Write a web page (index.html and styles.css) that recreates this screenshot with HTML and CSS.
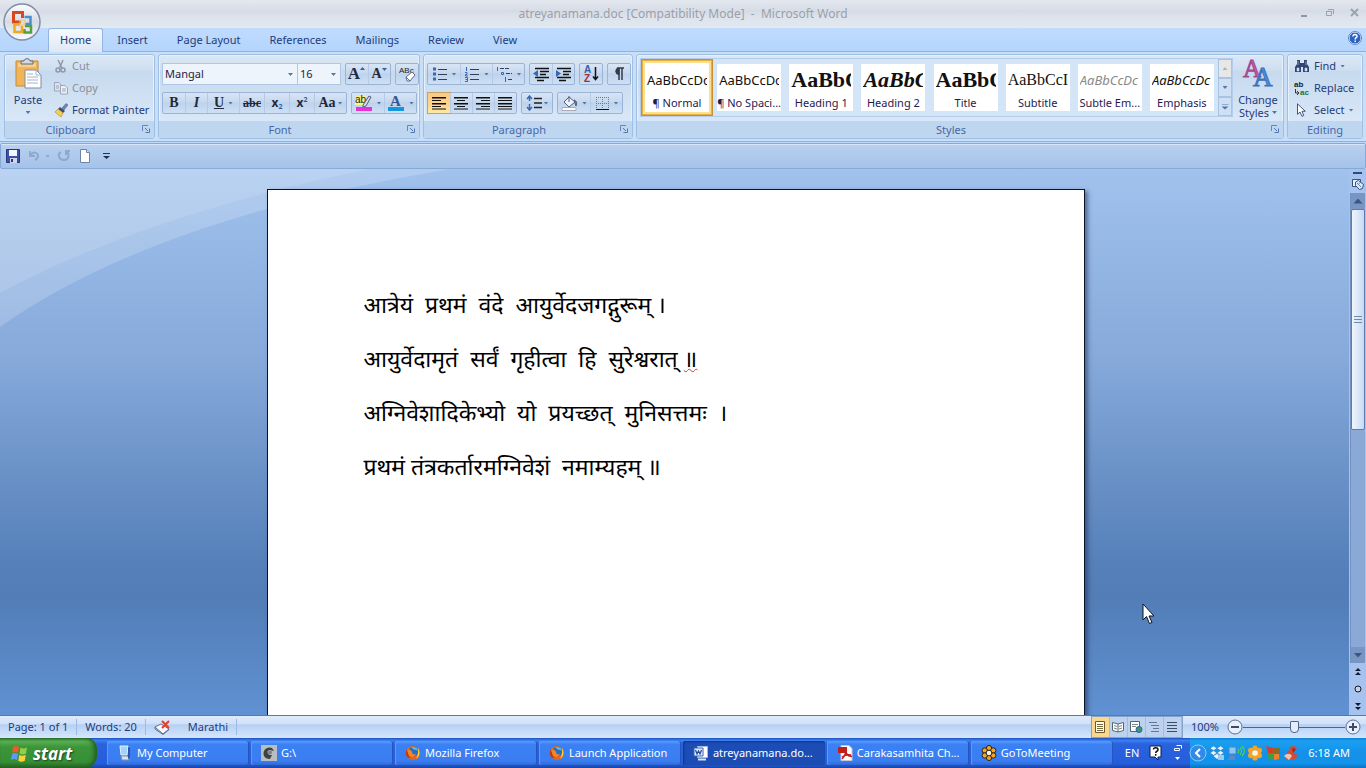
FILE: index.html
```html
<!DOCTYPE html>
<html lang="en">
<head>
    <meta charset="UTF-8">
    <meta name="viewport" content="width=device-width, initial-scale=1.0">
    <title>atreyanamana.doc [Compatibility Mode] - Microsoft Word</title>
    <link rel="stylesheet" href="styles.css">
</head>
<body>

    <!-- Shared icons -->
    <svg class="defs" width="0" height="0">
        <symbol id="launcher" viewBox="0 0 8 8">
            <path d="M.5 6V.5H6" fill="none" stroke="#6688b8"/>
            <path d="M3 3l3 3M7.500 3.500v4h-4" fill="none" stroke="#5577aa"/>
        </symbol>
        <symbol id="firefox" viewBox="0 0 16 16">
            <circle cx="8" cy="8" r="7" fill="#e8641b"/>
            <path d="M2 4a7 7 0 0 0 1 9l4-1-3-4z" fill="#c8380f"/>
            <circle cx="8.500" cy="6.500" r="4.800" fill="#2c6fb8"/>
            <path d="M6 2.500c3-1.500 6 0 7 3l-4-1z" fill="#58c0e8"/>
            <path d="M2 5c2-1 4 0 5 2 0 2 2 3 4 2-1 3-5 4-7 2z" fill="#f4862a"/>
            <path d="M13 3c2 3 2.500 8-2 11 2-3 2.500-7 2-11z" fill="#ffd23a"/>
        </symbol>
        <symbol id="flower" viewBox="0 0 18 18">
            <circle cx="9" cy="3.500" r="3"/><circle cx="9" cy="14.500" r="3"/>
            <circle cx="4.200" cy="6.200" r="3"/><circle cx="13.800" cy="6.200" r="3"/>
            <circle cx="4.200" cy="11.800" r="3"/><circle cx="13.800" cy="11.800" r="3"/>
            <circle cx="9" cy="9" r="3.200" fill="#fff3d8"/>
        </symbol>
    </svg>

    <!-- Title bar -->
    <header class="titlebar">
        <button class="office" type="button" aria-label="Office Button">
            <svg width="38" height="38" viewBox="0 0 38 38">
                <defs>
                    <linearGradient id="orb" x1="0" y1="0" x2="0" y2="1">
                        <stop offset="0" stop-color="#fdfdfe"/>
                        <stop offset=".5" stop-color="#d5dbe5"/>
                        <stop offset="1" stop-color="#fafcff"/>
                    </linearGradient>
                </defs>
                <circle cx="19" cy="19" r="18" fill="url(#orb)" stroke="#7f8da6" stroke-width="1.500"/>
                <g fill="none" stroke-width="3">
                    <path d="M18 19h-7.500v-9.500h9V15" stroke="#d9481c"/>
                    <path d="M21.500 14h6v7H22" stroke="#4a8ed0" stroke-width="2.500"/>
                    <path d="M17 21.500h-5.500v7.500h7.500v-6" stroke="#f2a81d" stroke-width="2.500"/>
                    <path d="M22 23h6v6.500h-6.500V26" stroke="#56a03a" stroke-width="2.500"/>
                    <path d="M17 17h5v5h-5z" stroke="#f3c470" stroke-width="1"/>
                </g>
            </svg>
        </button>
        <h1>atreyanamana.doc [Compatibility Mode] &nbsp;- &nbsp;Microsoft Word</h1>
        <div class="window-buttons">
            <button type="button" aria-label="Minimize"><svg width="10" height="10"><path d="M1 8h6" stroke="#8f98a8" stroke-width="2"/></svg></button>
            <button type="button" aria-label="Restore"><svg width="10" height="10"><path d="M1.500 3.500h5v4h-5zM3 1.500h5.500V6M1 3.500h6" fill="none" stroke="#9aa3b1"/></svg></button>
            <button type="button" aria-label="Close"><svg width="10" height="10"><path d="M1 1l7 7M8 1L1 8" stroke="#9aa3b1" stroke-width="2"/></svg></button>
        </div>
    </header>

    <!-- Tabs -->
    <nav class="tabs">
        <a class="tab active" href="#">Home</a>
        <a class="tab" href="#">Insert</a>
        <a class="tab" href="#">Page Layout</a>
        <a class="tab" href="#">References</a>
        <a class="tab" href="#">Mailings</a>
        <a class="tab" href="#">Review</a>
        <a class="tab" href="#">View</a>
        <button class="help" type="button" aria-label="Help">
            <svg width="14" height="14" viewBox="0 0 14 14">
                <circle cx="7" cy="7" r="6" fill="#2f62c0" stroke="#e8f1fd"/>
                <circle cx="7" cy="7" r="6.500" fill="none" stroke="#5f86c8"/>
                <path d="M5 5.500C5 3 9.200 3 9 5.400 9 6.800 7.200 6.600 7.200 8.400M7.200 9.600v1.400" fill="none" stroke="#fff" stroke-width="1.500"/>
            </svg>
        </button>
    </nav>

    <!-- Ribbon -->
    <div class="ribbon">
        <section class="group clipboard">
            <div class="group-body">
                <button class="big-button" type="button">
                    <svg width="28" height="32" viewBox="0 0 28 32">
                        <path d="M2 3h22v25H2z" fill="#f1b557" stroke="#c98a35"/>
                        <path d="M4 5h18v4H4z" fill="#f8cf8b"/>
                        <path d="M7 6V3h3c0-3 6-3 6 0h3v3z" fill="#d4dae4" stroke="#5f6b80"/>
                        <path d="M11 12h11l5 5v13H11z" fill="#fff" stroke="#7d8ca8"/>
                        <path d="M22 12v5h5M13 19h11M13 22h11M13 25h11M13 16h6" fill="none" stroke="#a4b4d0"/>
                    </svg>
                    <span>Paste</span>
                    <i class="arrow"></i>
                </button>
                <div class="command-list">
                    <button class="command" type="button" disabled>
                        <svg width="14" height="14" viewBox="0 0 14 14"><path d="M4 1l4 8M9 1L5.500 9" stroke="#8f98a6" stroke-width="1.500"/><circle cx="4" cy="11" r="2" fill="none" stroke="#8f98a6" stroke-width="1.500"/><circle cx="9" cy="11" r="2" fill="none" stroke="#8f98a6" stroke-width="1.500"/></svg>
                        Cut
                    </button>
                    <button class="command" type="button" disabled>
                        <svg width="14" height="14" viewBox="0 0 14 14"><path d="M.5 1.500H5L7.500 4v6h-7z" fill="#dde3ec" stroke="#9aa5b6"/><path d="M6.500 4.500H11L13.500 7v6h-7z" fill="#eef1f6" stroke="#9aa5b6"/><path d="M2 5h3M2 7h3M8 8h4M8 10h4" stroke="#9aa5b6"/></svg>
                        Copy
                    </button>
                    <button class="command" type="button">
                        <svg width="14" height="14" viewBox="0 0 14 14"><path d="M8 5l4-4.500L14 2l-4 5z" fill="#6f86b4" stroke="#46587f" stroke-width=".5"/><path d="M6 4l5 4-2 2-5-4z" fill="#3c4b70"/><path d="M4 6l5 4-2 4L1 9z" fill="#f3cf55" stroke="#a9822a" stroke-width=".6"/></svg>
                        Format Painter
                    </button>
                </div>
            </div>
            <footer>Clipboard<button class="launcher" type="button" aria-label="Clipboard options"><svg width="8" height="8"><use href="#launcher"/></svg></button></footer>
        </section>

        <section class="group font">
            <div class="group-body tool-rows">
                <div class="tool-row">
                    <div class="combos">
                        <label class="combo combo-font"><select aria-label="Font"><option>Mangal</option></select></label>
                        <label class="combo combo-size"><select aria-label="Font size"><option>16</option></select></label>
                    </div>
                    <div class="tools">
                        <button class="tool glyph grow" type="button" aria-label="Grow font">A<svg width="6" height="16"><path d="M0 4l2.500-3L5 4z" fill="#38619c"/></svg></button>
                        <button class="tool glyph shrink" type="button" aria-label="Shrink font">A<svg width="6" height="16"><path d="M0 2l2.500 3L5 2z" fill="#38619c"/></svg></button>
                    </div>
                    <div class="tools">
                        <button class="tool" type="button" aria-label="Clear formatting">
                            <svg width="18" height="18" viewBox="0 0 18 18"><text x="1" y="8" class="icon-text">ABc</text><path d="M8 12l6-5 3 3-5 6H9z" fill="#fff" stroke="#5d6f92"/><path d="M8 12l4 4" stroke="#5d6f92"/></svg>
                        </button>
                    </div>
                </div>
                <div class="tool-row">
                    <div class="tools">
                        <button class="tool glyph" type="button"><b>B</b></button>
                        <button class="tool glyph" type="button"><em>I</em></button>
                        <button class="tool glyph split" type="button"><u>U</u><i class="arrow"></i></button>
                        <button class="tool glyph small" type="button"><s>abc</s></button>
                        <button class="tool glyph script" type="button" aria-label="Subscript">x<sub>2</sub></button>
                        <button class="tool glyph script" type="button" aria-label="Superscript">x<sup>2</sup></button>
                        <button class="tool glyph case" type="button" aria-label="Change case">Aa<i class="arrow"></i></button>
                    </div>
                    <div class="tools">
                        <button class="tool split" type="button" aria-label="Highlight">
                            <svg width="18" height="18" viewBox="0 0 18 18"><path d="M0 2h11v9H0z" fill="#fdf38a"/><text x="0" y="9" class="icon-text wide">ab</text><path d="M8 11l6-9 2 1-5 9-3 1z" fill="#d4dbe8" stroke="#4f5f80"/><path d="M1 13h16v4H1z" fill="#e832d8"/></svg>
                            <i class="arrow"></i>
                        </button>
                        <button class="tool split" type="button" aria-label="Font color">
                            <svg width="18" height="18" viewBox="0 0 18 18"><text x="3" y="12" class="icon-letter">A</text><path d="M1 13h16v4H1z" fill="#1397dc"/></svg>
                            <i class="arrow"></i>
                        </button>
                    </div>
                </div>
            </div>
            <footer>Font<button class="launcher" type="button" aria-label="Font options"><svg width="8" height="8"><use href="#launcher"/></svg></button></footer>
        </section>

        <section class="group paragraph">
            <div class="group-body tool-rows">
                <div class="tool-row">
                    <div class="tools">
                        <button class="tool split" type="button" aria-label="Bullets">
                            <svg width="16" height="16"><path d="M1 3h3M1 8h3M1 13h3" stroke="#3a68b0" stroke-width="3"/><path d="M6 3.500h9M6 8.500h9M6 13.500h9" stroke="#333f55"/></svg><i class="arrow"></i>
                        </button>
                        <button class="tool split" type="button" aria-label="Numbering">
                            <svg width="16" height="16"><path d="M2.500 1v4M1 6.500h2v2H1.500V10H4M1 11.500h2.500v4H1M1.500 13.500h2" fill="none" stroke="#3a68b0"/><path d="M6 3.500h9M6 8.500h9M6 13.500h9" stroke="#333f55"/></svg><i class="arrow"></i>
                        </button>
                        <button class="tool split" type="button" aria-label="Multilevel list">
                            <svg width="17" height="16"><path d="M1.500 1v4M5.500 6.500h2v2h-2zM9.500 11v5" fill="none" stroke="#3a68b0"/><path d="M4 2.500h9M10 7.500h6M12 13.500h4" stroke="#333f55" stroke-dasharray="4 1"/></svg><i class="arrow"></i>
                        </button>
                    </div>
                    <div class="tools">
                        <button class="tool" type="button" aria-label="Decrease indent"><svg width="17" height="16"><path d="M2 2.500h14M7 5.500h9M7 8.500h6M2 11.500h14M4 14.500h7" stroke="#111" stroke-width="1.500"/><path d="M5 4v7L0 7.500z" fill="#3a68b0"/></svg></button>
                        <button class="tool" type="button" aria-label="Increase indent"><svg width="17" height="16"><path d="M2 2.500h14M8 5.500h8M8 8.500h6M2 11.500h14M4 14.500h7" stroke="#111" stroke-width="1.500"/><path d="M1 4v7l5-3.500z" fill="#3a68b0"/></svg></button>
                    </div>
                    <div class="tools">
                        <button class="tool" type="button" aria-label="Sort"><svg width="17" height="18"><text x="1" y="8" class="icon-sort">A</text><text x="1" y="17" class="icon-sort red">Z</text><path d="M12.500 2v12M10 11.500l2.500 3 2.500-3" fill="none" stroke="#111" stroke-width="1.500"/></svg></button>
                    </div>
                    <div class="tools">
                        <button class="tool glyph" type="button" aria-label="Show marks"><svg width="14" height="16"><path d="M7 2v12M10 2v12M5 2h7" fill="none" stroke="#333b4a" stroke-width="1.500"/><path d="M7 2a3 3 0 0 0 0 6.500z" fill="#333b4a" stroke="#333b4a"/></svg></button>
                    </div>
                </div>
                <div class="tool-row">
                    <div class="tools">
                        <button class="tool checked" type="button" aria-label="Align left"><svg width="15" height="14"><path d="M0 1.500h14M0 4.500h9M0 7.500h14M0 10.500h9M0 13h14" stroke="#111"/><path d="M0 2h14M0 8h14" stroke="#111"/></svg></button>
                        <button class="tool" type="button" aria-label="Center"><svg width="15" height="14"><path d="M0 1.500h14M3 4.500h8M0 7.500h14M3 10.500h8M0 13h14" stroke="#111"/><path d="M0 2h14M0 8h14" stroke="#111"/></svg></button>
                        <button class="tool" type="button" aria-label="Align right"><svg width="15" height="14"><path d="M0 1.500h14M5 4.500h9M0 7.500h14M5 10.500h9M0 13h14" stroke="#111"/><path d="M0 2h14M0 8h14" stroke="#111"/></svg></button>
                        <button class="tool" type="button" aria-label="Justify"><svg width="15" height="14"><path d="M0 1.500h14M0 4.500h14M0 7.500h14M0 10.500h14M0 13h14" stroke="#111"/><path d="M0 2h14M0 8h14" stroke="#111"/></svg></button>
                    </div>
                    <div class="tools">
                        <button class="tool spacing" type="button" aria-label="Line spacing"><svg width="16" height="16"><path d="M3.500 1v5M3.500 9v6M1 4l2.500-3L6 4M1 12l2.500 3L6 12" fill="none" stroke="#3a68b0" stroke-width="1.500"/><path d="M8 3.500h8M8 8h8M8 12.500h8" stroke="#222" stroke-width="1.500"/></svg><i class="arrow"></i></button>
                    </div>
                    <div class="tools">
                        <button class="tool split" type="button" aria-label="Shading"><svg width="17" height="16"><path d="M3 7l5-5 6 5-6 5z" fill="#f1f4fa" stroke="#4f5f80"/><path d="M8 7V1M13 5c3 1 3 3 2 6z" fill="#5a82b8" stroke="#4f5f80"/><path d="M1 12.500h14v3H1z" fill="#fff" stroke="#aab"/></svg><i class="arrow"></i></button>
                        <button class="tool split" type="button" aria-label="Borders"><svg width="15" height="15"><path d="M1.500 1v12M7.500 1v12M13.500 1v12M1 1.500h13M1 7.500h13" stroke="#6c7a94" stroke-dasharray="1 1"/><path d="M1 13.500h13" stroke="#111"/></svg><i class="arrow"></i></button>
                    </div>
                </div>
            </div>
            <footer>Paragraph<button class="launcher" type="button" aria-label="Paragraph options"><svg width="8" height="8"><use href="#launcher"/></svg></button></footer>
        </section>

        <section class="group styles">
            <div class="group-body">
                <div class="gallery">
                    <button class="style selected" type="button"><span class="sample">AaBbCcDc</span><span class="name">¶ Normal</span></button>
                    <button class="style" type="button"><span class="sample">AaBbCcDc</span><span class="name">¶ No Spaci...</span></button>
                    <button class="style" type="button"><span class="sample heading">AaBbC</span><span class="name">Heading 1</span></button>
                    <button class="style" type="button"><span class="sample heading slanted">AaBbC</span><span class="name">Heading 2</span></button>
                    <button class="style" type="button"><span class="sample heading">AaBbC</span><span class="name">Title</span></button>
                    <button class="style" type="button"><span class="sample subtitle">AaBbCcI</span><span class="name">Subtitle</span></button>
                    <button class="style" type="button"><span class="sample slanted subtle">AaBbCcDc</span><span class="name">Subtle Em...</span></button>
                    <button class="style" type="button"><span class="sample slanted">AaBbCcDc</span><span class="name">Emphasis</span></button>
                    <div class="gallery-scroll">
                        <button type="button" aria-label="Row up" disabled><i class="arrow up"></i></button>
                        <button type="button" aria-label="Row down"><i class="arrow"></i></button>
                        <button type="button" aria-label="More"><i class="arrow more"></i></button>
                    </div>
                </div>
                <button class="big-button change" type="button">
                    <svg width="32" height="32" viewBox="0 0 32 32">
                        <text x="1" y="19" class="change-a">A</text>
                        <text x="11" y="28" class="change-a blue">A</text>
                    </svg>
                    <span>Change</span>
                    <span>Styles<i class="arrow"></i></span>
                </button>
            </div>
            <footer>Styles<button class="launcher" type="button" aria-label="Styles options"><svg width="8" height="8"><use href="#launcher"/></svg></button></footer>
        </section>

        <section class="group editing">
            <div class="group-body">
                <div class="command-list">
                    <button class="command" type="button">
                        <svg width="16" height="14" viewBox="0 0 16 14"><path d="M3 1h3v3h4V1h3v4l2 3v5H9V8H7v5H1V8l2-3z" fill="#2f4672"/><path d="M3 9h2v3H3zM11 9h2v3h-2zM4 2v4M12 2v4" fill="#d5e2f5" stroke="#c5d5ee" stroke-width=".6"/></svg>
                        Find<i class="arrow"></i>
                    </button>
                    <button class="command" type="button">
                        <svg width="16" height="16" viewBox="0 0 16 16"><text x="0" y="7" class="icon-text bold">ab</text><path d="M1.500 9v4H4M3 11l2 2-2 2" fill="none" stroke="#333"/><text x="6" y="15" class="icon-text bold green">ac</text></svg>
                        Replace
                    </button>
                    <button class="command" type="button">
                        <svg width="16" height="14" viewBox="0 0 16 14"><path d="M3.500.8v10.500L6 9l2 4.300 1.800-.8L8 8.300h3.300z" fill="#fff" stroke="#43557c"/></svg>
                        Select<i class="arrow"></i>
                    </button>
                </div>
            </div>
            <footer>Editing</footer>
        </section>
    </div>

    <!-- Quick access toolbar -->
    <div class="quick-access">
        <button type="button" aria-label="Save"><svg width="14" height="14"><path d="M.5.500h13v13h-13z" fill="#3b52a8" stroke="#243880"/><path d="M3 1h8v6H3z" fill="#f4f7fd"/><path d="M4 9h7v5H4z" fill="#cdd5ea"/><path d="M5 10h2v3H5z" fill="#26397c"/></svg></button>
        <button type="button" aria-label="Undo" disabled><svg width="14" height="14"><path d="M2 2v5h5M2 7c3-5 8-4 8 0 0 2-1 3-3 4" fill="none" stroke="#8ea8cf" stroke-width="2"/></svg><i class="dots"></i></button>
        <button type="button" aria-label="Redo" disabled><svg width="14" height="14"><path d="M9 2c4 2 3 9-2 9S0 5 4 3M9 6V2h4" fill="none" stroke="#8ea8cf" stroke-width="2"/></svg></button>
        <button type="button" aria-label="New document"><svg width="12" height="14"><path d="M1.500.500h6l3 3v10h-9z" fill="#fff" stroke="#6c84ad"/><path d="M7.500.500v3h3" fill="#dce6f6" stroke="#6c84ad"/></svg></button>
        <button type="button" aria-label="Customize"><i class="arrow more dark"></i></button>
    </div>

    <!-- Document -->
    <main class="workspace">
        <svg class="swoosh" width="460" height="160" viewBox="0 0 460 160">
            <path d="M0 0h450C270 30 110 80 0 158z" fill="#fff" opacity=".18"/>
            <path d="M0 0h370C220 30 90 75 0 124z" fill="#fff" opacity=".12"/>
        </svg>
        <div class="canvas">
            <article class="page" lang="mr">
                <p>आत्रेयं  प्रथमं  वंदे  आयुर्वेदजगद्गुरूम् ।</p>
                <p>आयुर्वेदामृतं  सर्वं  गृहीत्वा  हि  सुरेश्वरात् <span class="misspelled">॥</span></p>
                <p>अग्निवेशादिकेभ्यो  यो  प्रयच्छत्  मुनिसत्तमः  ।</p>
                <p>प्रथमं तंत्रकर्तारमग्निवेशं  नमाम्यहम् ॥</p>
            </article>
        </div>
        <div class="scroll-column">
            <div class="split-handle"></div>
            <button type="button" class="ruler" aria-label="View ruler"><svg width="14" height="14"><path d="M1.500 2.500h8v7h-8z" fill="#eef4fd" stroke="#35527f"/><path d="M4.500 5l3-1.500 5 4-1 4-3 1-4-4z" fill="#dce8f9" stroke="#35527f"/><path d="M6 6l4 4M9 5.500L7 8" stroke="#6b85b0"/></svg></button>
            <div class="track">
                <button type="button" aria-label="Scroll up"><i class="arrow up"></i></button>
                <div class="thumb"></div>
                <button type="button" class="down" aria-label="Scroll down"><i class="arrow"></i></button>
            </div>
            <div class="browse">
                <button type="button" aria-label="Previous page"><svg width="8" height="8"><path d="M4 0l3 3H1zM4 4l3 3H1z" fill="#111a2c"/></svg></button>
                <button type="button" aria-label="Select browse object"><svg width="8" height="8"><circle cx="4" cy="4" r="3" fill="#c9d2de" stroke="#111a2c"/></svg></button>
                <button type="button" aria-label="Next page"><svg width="8" height="8"><path d="M4 4L1 1h6zM4 8L1 5h6z" fill="#111a2c"/></svg></button>
            </div>
        </div>
        <svg class="pointer" width="14" height="22" viewBox="0 0 14 22"><path d="M1 1v16l3.500-3.500L7.500 20.500l2.500-1L7 13h5z" fill="#fff" stroke="#0c1526"/></svg>
    </main>

    <!-- Status bar -->
    <div class="statusbar">
        <span class="status-item">Page: 1 of 1</span>
        <span class="status-item">Words: 20</span>
        <button class="status-item proof" type="button" aria-label="Proofing errors"><svg width="18" height="15"><path d="M1 7l6-3 8 5-6 5z" fill="#f6f8fc" stroke="#5b6f96"/><path d="M1 7v2l8 5.500 6-5V9" fill="none" stroke="#5b6f96"/><path d="M8 1l7 7M15 1L8 8" stroke="#e0412c" stroke-width="2"/></svg></button>
        <span class="status-item">Marathi</span>
        <div class="views">
            <button class="checked" type="button" aria-label="Print layout"><svg width="12" height="12"><path d="M1.500.500h9v11h-9z" fill="#fffbe8" stroke="#6b5a2c"/><path d="M3 3.500h6M3 5.500h6M3 7.500h6M3 9.500h6" stroke="#7a6a40"/></svg></button>
            <button type="button" aria-label="Full screen reading"><svg width="12" height="12"><path d="M.5 1.500L6 3l5.500-1.500v8L6 11 .500 9.500zM6 3v8" fill="#fff" stroke="#566"/><path d="M2 4.500l3 1M2 7l3 1M7 5.500l3-1M7 8l3-1" stroke="#788"/></svg></button>
            <button type="button" aria-label="Web layout"><svg width="13" height="12"><path d="M.5.500h9v10h-9z" fill="#fff" stroke="#566"/><path d="M2 3.500h6M2 5.500h4" stroke="#788"/><circle cx="9" cy="8.500" r="3" fill="#3d9a6a" stroke="#2b5fa8"/></svg></button>
            <button type="button" aria-label="Outline"><svg width="12" height="12"><path d="M1 1.500h8M3 4.500h8M5 7.500h6M3 10.500h8" stroke="#67758f"/></svg></button>
            <button type="button" aria-label="Draft"><svg width="12" height="12"><path d="M1 1.500h10M1 4.500h10M1 7.500h10M1 10.500h10" stroke="#3e4b64"/></svg></button>
        </div>
        <label class="zoom-label" for="zoom">100%</label>
        <div class="zoom">
            <button type="button" aria-label="Zoom out"><svg width="16" height="16"><circle cx="8" cy="8" r="7" fill="#e6effb" stroke="#5c6f92"/><path d="M4 8h8" stroke="#3c4b68" stroke-width="2"/></svg></button>
            <input type="range" id="zoom" min="0" max="100" value="50">
            <button type="button" aria-label="Zoom in"><svg width="16" height="16"><circle cx="8" cy="8" r="7" fill="#e6effb" stroke="#5c6f92"/><path d="M4 8h8M8 4v8" stroke="#3c4b68" stroke-width="2"/></svg></button>
        </div>
    </div>

    <!-- Windows taskbar -->
    <div class="taskbar">
        <button class="start" type="button">
            <svg width="18" height="18" viewBox="0 0 18 18">
                <path d="M2 3c2-1.500 4-1.500 6 0L7 9c-2-1.500-4-1.500-6 0z" fill="#ee5a2b"/>
                <path d="M9.500 3.500c2 1.300 4 1.300 6.500 0l-1 6c-2.500 1.300-4.500 1.300-6.500 0z" fill="#8ed04a"/>
                <path d="M1 10c2-1.500 4-1.500 6 0l-1 6c-2-1.500-4-1.500-6 0z" fill="#5b9cf2"/>
                <path d="M8.300 10.800c2 1.300 4 1.300 6.500 0l-1 6c-2.500 1.300-4.500 1.300-6.500 0z" fill="#fcd03a"/>
            </svg>
            start
        </button>
        <div class="tasks">
            <button class="task" type="button"><svg width="16" height="16"><path d="M3 1h8l-1 9H4z" fill="#9fd4fb" stroke="#e3f3ff"/><path d="M4 11h7l1 4H5z" fill="#d9e4ee" stroke="#7d93ae"/><path d="M11 2l2 1v9l-2 2z" fill="#2b55a8"/></svg>My Computer</button>
            <button class="task" type="button"><svg width="16" height="16"><path d="M0 0h16v16H0z" fill="#b9bec2"/><path d="M3 11C1 5 6 1 11 3l2 3-4-1c-4 0-3 6 2 5l-2 4c-3 0-5-1-6-3z" fill="#3d4245"/><circle cx="9" cy="7.500" r="2" fill="#7b8185"/></svg>G:\</button>
            <button class="task" type="button"><svg width="16" height="16"><use href="#firefox"/></svg>Mozilla Firefox</button>
            <button class="task" type="button"><svg width="16" height="16"><use href="#firefox"/></svg>Launch Application</button>
            <button class="task current" type="button"><svg width="16" height="16"><path d="M4.500 1.500h10v11h-10z" fill="#fff" stroke="#a8bce0"/><path d="M1 3h9v8H1z" fill="#e8effb" stroke="#3a62b0"/><path d="M2.500 5L4 9l1.500-3L7 9l1.500-4" fill="none" stroke="#24509f" stroke-width="1.300"/><path d="M5 14.500h8" stroke="#dce6f6" stroke-width="2"/></svg>atreyanamana.do...</button>
            <button class="task" type="button"><svg width="16" height="16"><path d="M4 .500h8l3 3v12H4z" fill="#fff" stroke="#c9c9d4"/><path d="M1 2h9v6H1z" fill="#c01f1c"/><path d="M9 4c0 5-2 8-4 10M9 8c2 3 4 3.500 6 3.500M5 12c3-2 6-2.500 9-2" fill="none" stroke="#c01f1c" stroke-width="1.500"/></svg>Carakasamhita Ch...</button>
            <button class="task" type="button"><svg width="16" height="16" class="flower dark"><use href="#flower"/></svg>GoToMeeting</button>
        </div>
        <div class="language">
            <span>EN</span>
            <button type="button" aria-label="Language help"><svg width="14" height="16"><path d="M1 1h11v11H9v3l-3-3H1z" fill="#fff" stroke="#0a1c50"/><path d="M4.500 4.500c0-2.500 4.500-2 4.500.3C9 6.500 6.700 6 6.700 8M6.700 9v1.800" fill="none" stroke="#111" stroke-width="1.500"/></svg></button>
            <button type="button" aria-label="Language bar options"><svg width="10" height="18"><path d="M3.500 1.500h5v3M1.500 4.500h5v2h-5z" fill="none" stroke="#fff"/><path d="M2 13h5l-2.500 3z" fill="#fff"/></svg></button>
        </div>
        <div class="tray">
            <button class="tray-toggle" type="button" aria-label="Show hidden icons"><svg width="18" height="18"><circle cx="9" cy="9" r="8" fill="#2f8ae8" stroke="#8cc8fa"/><path d="M11 5L7 9l4 4" fill="none" stroke="#fff" stroke-width="2"/></svg></button>
            <svg width="16" height="16"><path d="M4.500 1L8 3.300 4.500 5.600 1 3.300zM11.500 1L15 3.300l-3.500 2.300L8 3.300zM4.500 5.600L8 7.900l-3.500 2.300L1 7.900zM11.500 5.600L15 7.900l-3.500 2.300L8 7.900z" fill="#e9f4fd" stroke="#2475bd" stroke-width=".5"/><path d="M4.500 11L8 9l3.500 2L8 14z" fill="#e9f4fd"/><path d="M9 10h6v5H9z" fill="#9acbea"/></svg>
            <svg width="18" height="16"><path d="M2 2h7v7H2z" fill="#8cc6f5" stroke="#4f86c4"/><path d="M3 10l5 1v4H1z" fill="#5c88c8"/><path d="M11 4c1 1 1 3 0 4M13 2.500c2 2 2 5 0 7M15 1c3 3 3 7 0 10" fill="none" stroke="#53d34e" stroke-width="1.300"/></svg>
            <svg width="16" height="16" class="flower"><use href="#flower"/></svg>
            <svg width="16" height="16"><path d="M1 1l7 2v5H3z" fill="#d3402a"/><path d="M8 3h7v6H9z" fill="#8b6a28"/><path d="M2 9l6-1 1 6-5 1z" fill="#3d9e45"/><path d="M9 9h5v5l-5 1z" fill="#e6852b"/></svg>
            <svg width="16" height="16"><path d="M2 10c2-1 4-4 5-8 3-2 6-1 7 1l-4 5 5 2-3 4H3z" fill="#d44a35"/><path d="M1 11c3-3 6-3 8 0l-3 4z" fill="#e9c7b6"/><path d="M9 3l4 1-3 4z" fill="#8d2f26"/></svg>
            <time>6:18 AM</time>
        </div>
    </div>

</body>
</html>
```
FILE: styles.css
```css
* {
    box-sizing: border-box;
}

body {
    margin: 0;
    height: 100vh;
    display: flex;
    flex-direction: column;
    overflow: hidden;
    background: #bdd9fd;
    font-family: "Noto Sans", "Open Sans", sans-serif;
    font-size: 11px;
    line-height: 14px;
    color: #1e3c7b;
}

button, select {
    margin: 0;
    padding: 0;
    border: none;
    background: none;
    font: inherit;
    color: inherit;
}

svg {
    display: block;
    flex: none;
}

.defs {
    position: absolute;
}

.arrow {
    width: 5px;
    height: 3px;
    flex: none;
    background: #5577a5;
    clip-path: polygon(0 0, 100% 0, 50% 100%);
}

.arrow.up {
    clip-path: polygon(50% 0, 100% 100%, 0 100%);
}

.arrow.more {
    width: 7px;
    height: 6px;
    clip-path: polygon(0 0, 100% 0, 100% 1px, 0 1px, 0 3px, 100% 3px, 50% 100%, 0 3px);
}

.arrow.dark {
    background: #1d2f55;
}

/* Title bar */
.titlebar {
    position: relative;
    flex: none;
    height: 28px;
    display: flex;
    align-items: center;
    justify-content: center;
    background: linear-gradient(#e4e8ef, #d6dce6 40%, #dde3ec 60%, #e3e9f1);
}

.titlebar h1 {
    margin: 0;
    font-size: 12px;
    font-weight: normal;
    color: #9b9fa8;
}

.office {
    position: absolute;
    left: 3px;
    top: 3px;
    z-index: 2;
}

.window-buttons {
    position: absolute;
    right: 6px;
    top: 8px;
    display: flex;
    gap: 15px;
}

/* Tabs */
.tabs {
    flex: none;
    height: 24px;
    display: flex;
    align-items: flex-end;
    padding: 0 4px 0 48px;
    background: linear-gradient(#bfdbff, #b5d5fc);
    border-bottom: 1px solid #8db2e3;
}

.tab {
    padding: 5px 15px 4px 14px;
    color: #1e3c7b;
    text-decoration: none;
}

.tab.active {
    margin-bottom: -1px;
    padding: 4px 11px 5px;
    border: 1px solid #93b5e0;
    border-bottom: none;
    border-radius: 3px 3px 0 0;
    background: linear-gradient(#f5f9fe, #dde8f5);
}

.help {
    margin: 0 0 6px auto;
}

/* Ribbon */
.ribbon {
    flex: none;
    display: flex;
    gap: 3px;
    padding: 2px 3px 2px 4px;
    background: #c9def7;
    border-bottom: 1px solid #8fb0d9;
}

.group {
    display: flex;
    flex-direction: column;
    border: 1px solid #9fbfe4;
    border-radius: 3px;
    box-shadow: inset 0 0 0 1px #e6f1fc;
    background: linear-gradient(#dbe7f5, #cfdff1 18%, #c6d9ee 20%, #d9e8f8 80%);
}

.group-body {
    height: 66px;
    display: flex;
}

.group footer {
    position: relative;
    height: 17px;
    padding-right: 18px;
    text-align: center;
    line-height: 17px;
    color: #4669a6;
    background: #bfd6f0;
}

.editing footer {
    padding-right: 0;
}

.launcher {
    position: absolute;
    right: 4px;
    top: 4px;
}

.clipboard { width: 151px; }
.font { width: 262px; }
.paragraph { width: 210px; }
.styles { flex: 1; }
.editing { width: 76px; }

.big-button {
    width: 46px;
    display: flex;
    flex-direction: column;
    align-items: center;
    padding-top: 3px;
}

.big-button span {
    margin-top: 3px;
}

.big-button .arrow {
    margin-top: 4px;
}

.change {
    width: 50px;
}

.change span {
    margin-top: 0;
    line-height: 13px;
    display: flex;
    align-items: center;
}

.change svg {
    margin-bottom: 3px;
}

.change .arrow {
    margin: 0 0 0 3px;
}

.command-list {
    display: flex;
    flex-direction: column;
}

.command {
    height: 22px;
    display: flex;
    align-items: center;
    gap: 4px;
    white-space: nowrap;
}

.command:disabled {
    color: #8b909b;
}

.clipboard .command-list {
    padding-left: 3px;
}

.editing .command-list {
    padding-left: 6px;
}

.tool-rows {
    flex-direction: column;
    gap: 7px;
    padding: 8px 3px 0;
}

.tool-row {
    display: flex;
    gap: 4px;
}

.tools {
    display: flex;
    height: 22px;
    border: 1px solid #9ab4d8;
    border-radius: 2px;
    background: linear-gradient(#d8e5f5, #c6d8ef 45%, #bdd2ec 50%, #cfe0f4);
}

.tool {
    width: 22px;
    display: flex;
    align-items: center;
    justify-content: center;
    gap: 2px;
}

.tool + .tool {
    border-left: 1px solid #b5cae6;
}

.tool.checked {
    background: linear-gradient(#fbc983, #fdd58c 60%, #fee9a6);
    box-shadow: 0 0 0 1px #c2a26b;
}

.tool.split {
    width: 32px;
    gap: 4px;
}

.tool.spacing {
    width: 30px;
}

.glyph {
    font-family: "Liberation Serif", serif;
    font-size: 14px;
    font-weight: bold;
    color: #22293a;
}

.glyph.small,
.glyph.script {
    width: 25px;
    font-size: 12px;
    gap: 0;
}

.glyph.case {
    width: 32px;
}

.glyph.script {
    font-family: "Noto Sans", sans-serif;
}

.glyph sub,
.glyph sup {
    font-size: 7px;
    line-height: 7px;
    vertical-align: baseline;
    color: #2e5ca0;
}

.glyph sub { align-self: flex-end; margin-bottom: 3px; }
.glyph sup { align-self: flex-start; margin-top: 3px; }

.grow { font-size: 17px; gap: 0; }
.shrink { font-size: 14px; gap: 0; }

.combos {
    display: flex;
}

.combo {
    position: relative;
    display: flex;
    height: 22px;
    border: 1px solid #b0c7e4;
    background: #edf4fc;
}

.combo select {
    appearance: none;
    width: 100%;
    padding: 0 14px 0 2px;
    color: #2a1a4a;
}

.combo::after {
    content: "";
    position: absolute;
    right: 4px;
    top: 9px;
    width: 5px;
    height: 3px;
    background: #5577a5;
    clip-path: polygon(0 0, 100% 0, 50% 100%);
    pointer-events: none;
}

.combo-font { width: 136px; }
.combo-size { width: 43px; border-left: none; }

.icon-text {
    font-family: "Liberation Sans", sans-serif;
    font-size: 8px;
    fill: #222;
}

.icon-text.wide { font-size: 10px; }
.icon-text.bold { font-weight: bold; }
.icon-text.green { fill: #1c7034; }

.icon-letter {
    font: bold 15px "Liberation Serif", serif;
    fill: #34578f;
}

.icon-sort {
    font: bold 10px "Liberation Sans", sans-serif;
    fill: #2f62a8;
}

.icon-sort.red {
    fill: #a82b3a;
}

.change-a {
    font: 25px "Liberation Serif", serif;
    fill: #c65a9e;
    stroke: #a04a90;
    stroke-width: 1px;
}

.change-a.blue {
    font-size: 27px;
    fill: #4d8ede;
    stroke: #3a70b8;
}

/* Style gallery */
.gallery {
    flex: 1;
    display: flex;
    justify-content: space-between;
    margin: 3px 0 4px 3px;
    border: 1px solid #b4cdec;
    background: #d5e5f8;
}

.style {
    width: 72px;
    border: 4px solid transparent;
    border-width: 5px 4px;
    background: #fff;
    background-clip: padding-box;
    display: flex;
    flex-direction: column;
    align-items: center;
    color: #27194f;
}

.style.selected {
    border: 2px solid #e8ae3c;
    outline: 1px solid #c88f35;
    outline-offset: -1px;
    box-shadow: inset 0 0 0 2px #fbdf93;
    padding: 3px 2px;
}

.sample {
    width: 60px;
    height: 32px;
    overflow: hidden;
    line-height: 32px;
    font-size: 13px;
    text-align: left;
    color: #111;
}

.sample.heading {
    font: bold 22px/32px "Liberation Serif", serif;
}

.sample.subtitle {
    font: 16px/32px "Liberation Serif", serif;
}

.sample.slanted { font-style: italic; }
.sample.subtle { color: #8a8a8a; }

.name {
    white-space: nowrap;
}

.gallery-scroll {
    display: flex;
    flex-direction: column;
    width: 14px;
}

.gallery-scroll button {
    flex: 1;
    display: flex;
    align-items: center;
    justify-content: center;
    border: 1px solid #a9c3e4;
    background: #cfe0f5;
}

.gallery-scroll button:disabled {
    background: #e5e8e6;
}

.gallery-scroll button:disabled .arrow {
    background: #aab4bf;
}

/* Quick access toolbar */
.quick-access {
    flex: none;
    height: 26px;
    margin-top: 1px;
    padding: 0 5px;
    display: flex;
    align-items: center;
    gap: 8px;
    border: 1px solid #86a9d8;
    border-radius: 2px;
    background: linear-gradient(#b9d1ef, #a5c2e8);
    box-shadow: inset 0 1px #d6e5f8;
}

.quick-access button {
    display: flex;
    align-items: center;
    gap: 4px;
}

.quick-access button:last-child {
    margin-left: 4px;
}

.dots {
    width: 3px;
    height: 2px;
    background: #8ea8cf;
}

/* Document area */
.workspace {
    position: relative;
    flex: 1;
    min-height: 0;
    display: flex;
    background: linear-gradient(#a1c2ed, #86a9da 35%, #5580b9 72%, #527db6 78%, #6091d2);
}

.swoosh {
    position: absolute;
    left: 0;
    top: 0;
}

.canvas {
    position: relative;
    flex: 1;
    padding: 20px 0 0 2px;
    overflow: hidden;
}

.page {
    width: 818px;
    max-width: 100%;
    height: 100%;
    margin: 0 auto;
    padding: 90px 0 0 96px;
    border: 1px solid #0c1424;
    border-bottom: none;
    background: #fff;
    box-shadow: 3px 2px 4px rgba(20, 40, 80, 0.5);
    color: #000;
}

.page p {
    margin: 0;
    font-family: "Mangal", "Noto Sans Devanagari", "Noto Sans", sans-serif;
    font-size: 23px;
    line-height: 54px;
    white-space: pre-wrap;
}

.misspelled {
    text-decoration: underline wavy #d23a3a 1px;
}

.scroll-column {
    flex: none;
    width: 17px;
    display: flex;
    flex-direction: column;
    align-items: center;
    background: #a5c3ee;
}

.split-handle {
    width: 9px;
    height: 2px;
    margin: 3px 0 1px;
    background: #2c4a7c;
}

.ruler {
    height: 18px;
}

.track {
    flex: 1;
    width: 15px;
    display: flex;
    flex-direction: column;
    background: #8ba9d6;
    border-left: 1px solid #7391c0;
}

.track button {
    height: 16px;
    display: flex;
    align-items: center;
    justify-content: center;
    background: #7895c4;
}

.track .arrow {
    width: 9px;
    height: 5px;
    background: #3a5688;
}

.track .down {
    margin-top: auto;
}

.thumb {
    height: 47%;
    border: 1px solid #5f7cab;
    border-radius: 2px;
    background:
        repeating-linear-gradient(#7089b3 0 1px, transparent 1px 3px) center / 8px 7px no-repeat,
        linear-gradient(90deg, #f0f5fd, #c8daf3);
}

.browse {
    height: 52px;
    display: flex;
    flex-direction: column;
    align-items: center;
    justify-content: space-around;
}

.pointer {
    position: absolute;
    right: 210px;
    bottom: 90px;
}

/* Status bar */
.statusbar {
    flex: none;
    height: 23px;
    display: flex;
    align-items: center;
    border-top: 1px solid #567ba8;
    background: linear-gradient(#dfeafb, #cfe1fa 35%, #b6d0f3 40%, #d5e6fc);
}

.status-item {
    display: flex;
    align-items: center;
    height: 16px;
    padding: 0 8px;
    border-right: 1px solid #9dbbe2;
}

.status-item.proof {
    border-right: none;
}

.views {
    display: flex;
    height: 100%;
    margin-left: auto;
    border: 1px solid #86a3cc;
    background: #bdd2ef;
}

.views button {
    width: 18px;
    display: flex;
    align-items: center;
    justify-content: center;
    border-right: 1px solid #a3bde0;
}

.views .checked {
    background: #fbd78b;
}

.zoom-label {
    padding: 0 8px;
}

.zoom {
    width: 134px;
    display: flex;
    align-items: center;
    margin-right: 5px;
}

.zoom input {
    appearance: none;
    flex: 1;
    min-width: 0;
    height: 14px;
    margin: 0;
    background: linear-gradient(#4d658f, #4d658f) center / 100% 1px no-repeat;
}

.zoom input::-webkit-slider-thumb {
    appearance: none;
    width: 9px;
    height: 12px;
    border: 1px solid #50648c;
    border-radius: 1px 1px 4px 4px;
    background: #e4edfa;
}

/* Taskbar */
.taskbar {
    flex: none;
    height: 30px;
    display: flex;
    align-items: stretch;
    background: linear-gradient(#1f4fc0, #3a80f2 8%, #2a62dc 20%, #245edc 85%, #1b43a8);
    color: #fff;
}

.start {
    width: 97px;
    display: flex;
    align-items: center;
    gap: 4px;
    padding-left: 11px;
    border-radius: 0 10px 12px 0;
    background: linear-gradient(#2d7a2c, #5cb156 10%, #3c9539 30%, #378f35 80%, #246323);
    box-shadow: inset -3px 0 4px #235f23;
    font: italic bold 17px "Open Sans", sans-serif;
    text-shadow: 1px 1px 2px #1c3f1c;
}

.tasks {
    flex: 1;
    display: grid;
    grid-template-columns: repeat(7, 1fr);
    gap: 2px;
    padding: 3px 0 3px 10px;
}

.task {
    min-width: 0;
    display: flex;
    align-items: center;
    gap: 4px;
    padding-left: 10px;
    border-radius: 2px;
    background: linear-gradient(#5a9bfb, #3b81f3 15%, #3a7df0 85%, #2d68d6);
    box-shadow: inset 1px 0 #5c9afc, inset -1px 0 #2555bd;
    white-space: nowrap;
}

.task.current {
    background: #1c4db5;
    box-shadow: inset 1px 1px 2px #123585;
}

.flower {
    fill: #f7a325;
}

.flower.dark {
    stroke: #14181f;
    stroke-width: 1px;
}

.language {
    display: flex;
    align-items: center;
    gap: 10px;
    padding: 0 7px 0 12px;
}

.tray {
    display: flex;
    align-items: center;
    gap: 2px;
    padding-right: 16px;
    background: linear-gradient(#1181d8, #1aa0f2 10%, #1490e8 50%, #1293ea 85%, #0f6fbf);
}

.tray-toggle {
    margin-left: -1px;
}

.tray time {
    margin-left: 7px;
}
```
